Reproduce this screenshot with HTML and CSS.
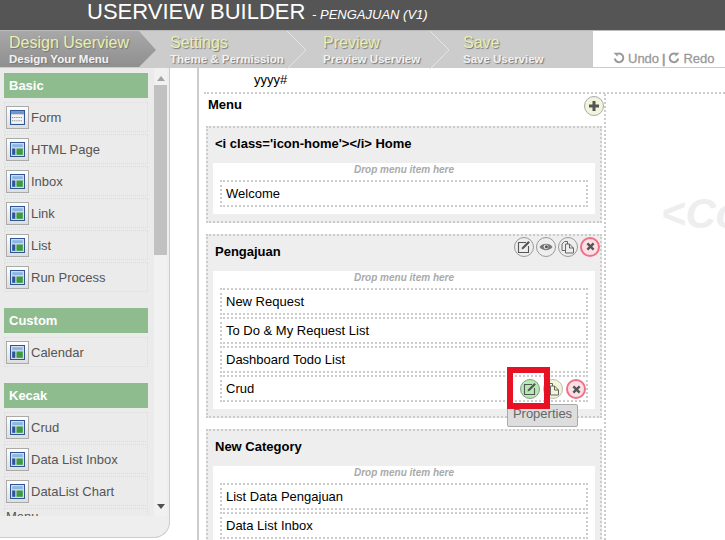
FILE: index.html
```html
<!DOCTYPE html>
<html lang="en">
<head>
<meta charset="UTF-8">
<title>Userview Builder</title>
<link rel="stylesheet" href="styles.css">
</head>
<body>
<svg class="defs" width="0" height="0">
  <symbol id="i-page" viewBox="0 0 14 14">
    <rect x=".5" y=".5" width="13" height="13" fill="#dfe9f7" stroke="#2f5597"/>
    <rect x="2" y="2" width="10" height="3" fill="#8fb4e3"/>
    <rect x="2" y="6" width="3" height="6" fill="#2f5597"/>
    <rect x="6" y="6" width="6" height="6" fill="#3f9a3f"/>
  </symbol>
  <symbol id="i-form" viewBox="0 0 14 14">
    <rect x=".5" y=".5" width="13" height="13" fill="#f4f4f4" stroke="#2f5597"/>
    <rect x="1" y="1" width="12" height="3" fill="#6f93c7"/>
    <path d="M2 7h10M2 10h10" stroke="#777" stroke-dasharray="1 1"/>
  </symbol>
  <symbol id="i-edit" viewBox="0 0 14 14">
    <path d="M9 2.500H1.500v10h10V6" fill="none" stroke="#555" stroke-width="1.100"/>
    <path d="M4.500 9.500l.7-2.200L11.300 1l1.600 1.600-6.200 6.200z" fill="#555"/>
  </symbol>
  <symbol id="i-eye" viewBox="0 0 14 14">
    <path d="M.5 7C3.500 2.800 10.500 2.800 13.500 7 10.500 11.200 3.500 11.200.5 7z" fill="#777"/>
    <circle cx="7" cy="6.800" r="2.400" fill="#e4e4e4"/>
    <circle cx="7.400" cy="6.800" r="1.500" fill="#555"/>
  </symbol>
  <symbol id="i-copy" viewBox="0 0 14 14">
    <path d="M6.500 4V1.500H3.500L1 4v6.500H4.500" fill="none" stroke="#666"/>
    <path d="M8.500 4H4.500v9h8V8zM8.500 4v4h4" fill="none" stroke="#666"/>
  </symbol>
  <symbol id="i-close" viewBox="0 0 14 14">
    <path d="M3 3l8 8M11 3l-8 8" stroke="#555" stroke-width="3"/>
  </symbol>
</svg>

<header class="title-bar">
  <span class="title">USERVIEW BUILDER</span>
  <em class="subtitle">- PENGAJUAN (V1)</em>
</header>

<nav class="steps">
  <div class="step step-active">
    <b>Design Userview</b><small>Design Your Menu</small>
  </div>
  <div class="step step-two">
    <b>Settings</b><small>Theme &amp; Permission</small>
    <svg class="chevron" width="22" height="38"><path d="M1 0l19 19L1 38" fill="none" stroke="#e4e4e4"/></svg>
  </div>
  <div class="step step-three">
    <b>Preview</b><small>Preview Userview</small>
    <svg class="chevron" width="22" height="38"><path d="M1 0l19 19L1 38" fill="none" stroke="#e4e4e4"/></svg>
  </div>
  <div class="step step-four">
    <b>Save</b><small>Save Userview</small>
  </div>
  <div class="history">
    <svg width="12" height="12" viewBox="0 0 12 12"><path d="M3 2.800a4.300 4.300 0 1 1-1.200 3.700" fill="none" stroke="#999" stroke-width="2"/><path d="M.5.800h4v4z" fill="#999"/></svg>
    <span>Undo</span><span class="bar">|</span>
    <svg width="12" height="12" viewBox="0 0 12 12"><path d="M9 2.800a4.300 4.300 0 1 0 1.200 3.700" fill="none" stroke="#999" stroke-width="2"/><path d="M11.500.800h-4v4z" fill="#999"/></svg>
    <span>Redo</span>
  </div>
</nav>

<main class="workspace">
  <aside class="palette">
    <div class="palette-list">
      <h3 class="group">Basic</h3>
      <div class="tool"><span class="tool-icon"><svg width="15" height="15"><use href="#i-form"/></svg></span>Form</div>
      <div class="tool"><span class="tool-icon"><svg width="15" height="15"><use href="#i-page"/></svg></span>HTML Page</div>
      <div class="tool"><span class="tool-icon"><svg width="15" height="15"><use href="#i-page"/></svg></span>Inbox</div>
      <div class="tool"><span class="tool-icon"><svg width="15" height="15"><use href="#i-page"/></svg></span>Link</div>
      <div class="tool"><span class="tool-icon"><svg width="15" height="15"><use href="#i-page"/></svg></span>List</div>
      <div class="tool"><span class="tool-icon"><svg width="15" height="15"><use href="#i-page"/></svg></span>Run Process</div>
      <h3 class="group">Custom</h3>
      <div class="tool"><span class="tool-icon"><svg width="15" height="15"><use href="#i-page"/></svg></span>Calendar</div>
      <h3 class="group">Kecak</h3>
      <div class="tool"><span class="tool-icon"><svg width="15" height="15"><use href="#i-page"/></svg></span>Crud</div>
      <div class="tool"><span class="tool-icon"><svg width="15" height="15"><use href="#i-page"/></svg></span>Data List Inbox</div>
      <div class="tool"><span class="tool-icon"><svg width="15" height="15"><use href="#i-page"/></svg></span>DataList Chart</div>
      <div class="tool tool-plain">Menu</div>
    </div>
    <div class="scrollbar">
      <i class="arrow-up"></i>
      <div class="thumb"></div>
      <i class="arrow-down"></i>
    </div>
  </aside>

  <section class="canvas">
    <div class="canvas-top">yyyy#</div>
    <div class="canvas-body">
      <div class="menu-panel">
        <div class="menu-head">
          <strong>Menu</strong>
          <span class="btn btn-add"><svg width="12" height="12" viewBox="0 0 12 12"><path d="M6 1v10M1 6h10" stroke="#555" stroke-width="3"/></svg></span>
        </div>

        <div class="category">
          <div class="cat-head"><strong>&lt;i class='icon-home'&gt;&lt;/i&gt; Home</strong></div>
          <div class="cat-body">
            <div class="drop">Drop menu item here</div>
            <div class="item">Welcome</div>
          </div>
        </div>

        <div class="category">
          <div class="cat-head">
            <strong>Pengajuan</strong>
            <div class="actions">
              <span class="btn"><svg width="14" height="14"><use href="#i-edit"/></svg></span>
              <span class="btn"><svg width="14" height="14"><use href="#i-eye"/></svg></span>
              <span class="btn"><svg width="14" height="14"><use href="#i-copy"/></svg></span>
              <span class="btn btn-del"><svg width="11" height="11"><use href="#i-close"/></svg></span>
            </div>
          </div>
          <div class="cat-body">
            <div class="drop">Drop menu item here</div>
            <div class="item">New Request</div>
            <div class="item">To Do &amp; My Request List</div>
            <div class="item">Dashboard Todo List</div>
            <div class="item">Crud
              <div class="actions item-actions">
                <span class="btn btn-on"><svg width="14" height="14"><use href="#i-edit"/></svg></span>
                <span class="btn btn-copy"><svg width="14" height="14"><use href="#i-copy"/></svg></span>
                <span class="btn btn-del"><svg width="11" height="11"><use href="#i-close"/></svg></span>
              </div>
              <div class="tooltip">Properties</div>
              <div class="highlight"></div>
            </div>
          </div>
        </div>

        <div class="category">
          <div class="cat-head"><strong>New Category</strong></div>
          <div class="cat-body">
            <div class="drop">Drop menu item here</div>
            <div class="item">List Data Pengajuan</div>
            <div class="item">Data List Inbox</div>
          </div>
        </div>
      </div>
      <div class="preview"><span class="watermark">&lt;Content</span></div>
    </div>
  </section>
</main>
</body>
</html>
```

FILE: styles.css
```css
*{box-sizing:border-box;margin:0;padding:0;}
html,body{height:540px;overflow:hidden;}
body{background:#fff;color:#000;font-family:"Liberation Sans",Arial,sans-serif;font-size:13px;}
.defs{position:absolute;}

.title-bar{height:30px;background:#555;color:#fff;padding-left:87px;line-height:24px;white-space:nowrap;}
.title{font-size:22px;}
.subtitle{font-size:13px;margin-left:3px;}

.steps{display:flex;height:38px;background:#ccc;border-top:1px solid #bbb;border-bottom:1px solid #ccc;}
.step{position:relative;padding:2px 0 0 9px;display:flex;flex-direction:column;color:#fff;white-space:nowrap;}
.step b{font-weight:normal;font-size:16px;line-height:20px;color:#e8f0b0;text-shadow:1px 1px 1px #777;}
.step small{font-size:11.500px;font-weight:bold;line-height:13px;color:#f2f2f2;text-shadow:1px 1px 1px #777;}
.step-active{width:156px;background:linear-gradient(#a8a8a8,#8f8f8f);clip-path:polygon(0 0,139px 0,156px 19px,139px 100%,0 100%);}
.step-two{width:157px;padding-left:14px;}
.step-three{width:140px;padding-left:10px;}
.step-four{width:140px;padding-left:10px;}
.step-two .chevron{position:absolute;top:0;right:5px;}
.step-three .chevron{position:absolute;top:0;right:2px;}
.history{flex:1;display:flex;align-items:center;gap:3px;background:#fff;padding:18px 0 0 20px;color:#999;font-size:13px;}
.history span{-webkit-text-stroke:.3px #999;}
.history .bar{-webkit-text-stroke:.7px #999;}

.workspace{display:flex;height:472px;}
.palette{width:170px;height:470px;display:flex;background:#eee;border-right:1px solid #ccc;border-bottom:1px solid #ccc;border-bottom-right-radius:16px;padding-bottom:21px;}
.palette-list{width:154px;overflow:hidden;padding:5px 6px 0 4px;background:#ebebeb;}
.group{height:25px;line-height:25px;padding-left:5px;margin-bottom:4px;background:#8fbc8f;color:#fff;font-size:13px;}
.tool{height:30px;margin-bottom:2px;padding-left:1px;display:flex;align-items:center;gap:2px;border:1px dotted #ddd;color:#555;font-size:13px;}
.tool + .group{margin-top:16px;}
.tool-icon{width:23px;height:23px;display:flex;align-items:center;justify-content:center;border:1px solid #aaa;background:linear-gradient(#fff,#ddd);}
.tool-plain{align-items:flex-start;line-height:15px;}
.scrollbar{width:13px;background:#f1f1f1;display:flex;flex-direction:column;align-items:center;justify-content:space-between;padding:8px 0 7px;position:relative;}
.thumb{position:absolute;top:17px;left:0;width:13px;height:170px;background:#c1c1c1;}
.arrow-up{border:4px solid transparent;border-top:0;border-bottom:5px solid #a3a3a3;}
.arrow-down{border:4px solid transparent;border-bottom:0;border-top:5px solid #505050;}

.canvas{margin-left:27px;flex:1;border-left:2px solid #ccc;overflow:hidden;}
.canvas-top{height:24px;line-height:23px;padding-left:55px;}
.canvas-body{display:flex;border-top:2px dotted #ccc;margin-left:5px;height:460px;}
.menu-panel{width:402px;border-right:2px dotted #ccc;padding-left:2px;}
.menu-head{height:32px;display:flex;justify-content:space-between;padding:3px 0 0 2px;line-height:16px;}
.menu-head .btn{margin-top:-1px;}
.category{width:396px;margin-bottom:11px;background:#eee;border:2px dotted #ccc;padding:0 5px 7px;}
.cat-head{height:35px;display:flex;justify-content:space-between;align-items:center;padding:0 0 4px 2px;}
.cat-body{background:#fff;padding:0 7px 7px;}
.drop{height:17px;line-height:13px;text-align:center;font-size:10px;font-style:italic;font-weight:bold;color:#aaa;}
.item{position:relative;height:27px;margin-bottom:2px;padding-left:4px;line-height:23px;border:2px dotted #ccc;}
.item:last-child{margin-bottom:0;}

.actions{display:flex;gap:2px;margin:-10px -5px 0 0;}
.btn{width:20px;height:20px;display:inline-flex;align-items:center;justify-content:center;border:1px solid #999;border-radius:50%;background:#eee;}
.btn-add{background:#f0f6dc;border-color:#aaa;}
.btn-del{background:#fbe0e6;border:2px solid #f07088;}
.btn-on{background:#b5eab0;border-color:#8a9a8a;}
.btn-copy{background:#f2f6d6;border-color:#bbb;}
.item-actions{position:absolute;right:0;top:2px;margin:0;gap:3px;}
.tooltip{position:absolute;left:285px;top:27px;width:71px;height:23px;background:#ddd;border:1px solid #aaa;border-radius:2px;text-align:center;color:#666;line-height:17px;}
.highlight{position:absolute;left:285px;top:-10px;width:43px;height:42px;border:6px solid #e81123;}

.preview{flex:1;overflow:hidden;padding:96px 0 0 55px;}
.watermark{font-size:42px;line-height:48px;font-weight:bold;font-style:italic;color:#eee;white-space:nowrap;}
```
